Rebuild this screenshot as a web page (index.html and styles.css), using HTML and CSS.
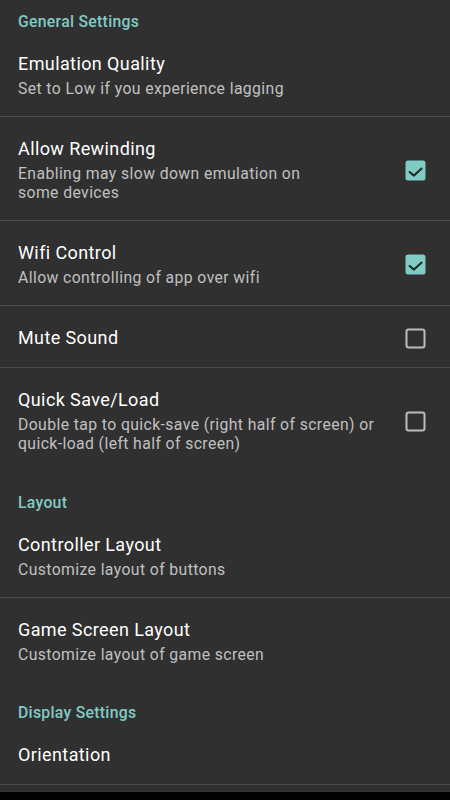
FILE: index.html
```html
<!DOCTYPE html>
<html lang="en">
<head>
<meta charset="utf-8">
<title>Settings</title>
<link rel="stylesheet" href="styles.css">
</head>
<body>
<div class="screen">
  <div class="list">
    <div class="category first">General Settings</div>
    <div class="pref divided">
      <div class="text">
        <div class="title">Emulation Quality</div>
        <div class="summary">Set to Low if you experience lagging</div>
      </div>
    </div>
    <div class="pref divided">
      <div class="text">
        <div class="title">Allow Rewinding</div>
        <div class="summary">Enabling may slow down emulation on<br>some devices</div>
      </div>
      <svg class="check" viewBox="0 0 21 21" width="21" height="21"><rect x="0.5" y="0.5" width="20" height="20" rx="2.5" fill="#80cbc4"/><path d="M4.6 12 L9 15.6 L16.6 8.6" fill="none" stroke="#1f2a29" stroke-width="2.1" stroke-linecap="round" stroke-linejoin="round"/></svg>
    </div>
    <div class="pref divided">
      <div class="text">
        <div class="title">Wifi Control</div>
        <div class="summary">Allow controlling of app over wifi</div>
      </div>
      <svg class="check" viewBox="0 0 21 21" width="21" height="21"><rect x="0.5" y="0.5" width="20" height="20" rx="2.5" fill="#80cbc4"/><path d="M4.6 12 L9 15.6 L16.6 8.6" fill="none" stroke="#1f2a29" stroke-width="2.1" stroke-linecap="round" stroke-linejoin="round"/></svg>
    </div>
    <div class="pref divided">
      <div class="text">
        <div class="title">Mute Sound</div>
      </div>
      <svg class="check" viewBox="0 0 21 21" width="21" height="21"><rect x="1.5" y="1.5" width="18" height="18" rx="2" fill="none" stroke="#bcbcbc" stroke-width="2"/></svg>
    </div>
    <div class="pref">
      <div class="text">
        <div class="title">Quick Save/Load</div>
        <div class="summary">Double tap to quick-save (right half of screen) or<br>quick-load (left half of screen)</div>
      </div>
      <svg class="check" viewBox="0 0 21 21" width="21" height="21"><rect x="1.5" y="1.5" width="18" height="18" rx="2" fill="none" stroke="#bcbcbc" stroke-width="2"/></svg>
    </div>
    <div class="category">Layout</div>
    <div class="pref divided">
      <div class="text">
        <div class="title">Controller Layout</div>
        <div class="summary">Customize layout of buttons</div>
      </div>
    </div>
    <div class="pref">
      <div class="text">
        <div class="title">Game Screen Layout</div>
        <div class="summary">Customize layout of game screen</div>
      </div>
    </div>
    <div class="category">Display Settings</div>
    <div class="pref divided">
      <div class="text">
        <div class="title">Orientation</div>
      </div>
    </div>
  </div>
  <div class="navbar"></div>
</div>
</body>
</html>
```

FILE: styles.css
```css
html, body {
  margin: 0;
  padding: 0;
  background: #000;
}
body {
  font-family: Roboto, "Noto Sans", "Liberation Sans", sans-serif;
  -webkit-font-smoothing: antialiased;
}
.screen {
  width: 450px;
  height: 800px;
  display: flex;
  flex-direction: column;
  overflow: hidden;
}
.list {
  flex: 1;
  min-height: 0;
  overflow: hidden;
  background: #303030;
}
.navbar {
  height: 8px;
  background: #000;
  flex: none;
}
.category {
  color: #80cbc4;
  font-size: 15.75px;
  font-weight: 500;
  line-height: 19px;
  letter-spacing: 0.3px;
  padding: 21.5px 18px 1px;
}
.category.first {
  padding-top: 12px;
}
.pref {
  display: flex;
  align-items: center;
  padding: 21px 24px 18px 18px;
}
.pref.divided {
  border-bottom: 1px solid #4a4a4a;
}
.text {
  flex: 1;
  min-width: 0;
}
.title {
  color: #ffffff;
  font-size: 18px;
  line-height: 22px;
  letter-spacing: 0.4px;
}
.summary {
  color: #c0c0c0;
  font-size: 15.75px;
  line-height: 19px;
  letter-spacing: 0.4px;
  margin-top: 4px;
}
.check {
  flex: none;
  display: block;
  margin-left: 16px;
}
```
